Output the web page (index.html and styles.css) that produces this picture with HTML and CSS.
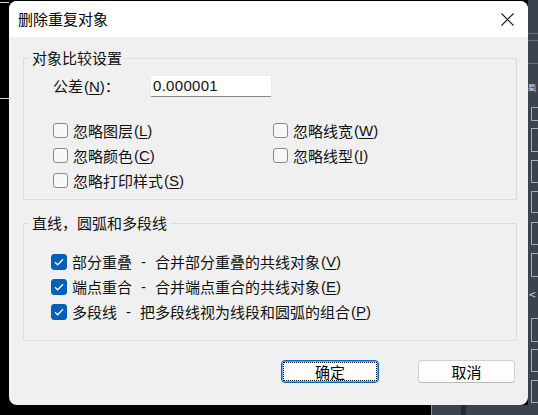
FILE: index.html
```html
<!DOCTYPE html>
<html lang="zh-CN">
<head>
<meta charset="utf-8">
<title>删除重复对象</title>
<link rel="stylesheet" href="styles.css">
</head>
<body>
<div class="desktop">
  <div class="bg-line bg-line-a"></div>
  <div class="bg-line bg-line-b"></div>
  <div class="side">
    <div class="side-h side-h1"></div>
    <div class="side-h side-h2"></div>
    <div class="side-h side-h3"></div>
    <span class="side-text">星[</span>
    <div class="side-box" style="top:107px;height:14px"></div>
    <div class="side-box" style="top:128px;height:24px"></div>
    <div class="side-box" style="top:160px;height:23px"></div>
    <div class="side-box" style="top:191px;height:22px"></div>
    <div class="side-box" style="top:222px;height:23px"></div>
    <div class="side-box" style="top:253px;height:24px"></div>
    <span class="side-arrow">&lt;</span>
    <div class="side-box" style="top:318px;height:24px"></div>
    <div class="side-box" style="top:349px;height:23px"></div>
    <div class="side-box" style="top:380px;height:23px"></div>
  </div>
  <div class="bottom-strip">
    <div class="bottom-block"></div>
  </div>

  <div class="dialog">
    <div class="titlebar">
      <span class="title">删除重复对象</span>
      <span class="close">
        <svg width="13" height="13" viewBox="0 0 13 13"><path d="M0.5 0.5 L12.5 12.5 M12.5 0.5 L0.5 12.5" stroke="#1a1a1a" stroke-width="1.1" fill="none"/></svg>
      </span>
    </div>
    <div class="body">
      <section class="group g1">
        <div class="legend">对象比较设置</div>
        <div class="tol-row">
          <span class="tol-label">公差<span class="mn">(<u>N</u>)</span>：</span>
          <div class="input">0.000001</div>
        </div>
        <div class="opts">
          <label class="opt"><span class="cb"></span>忽略图层<span class="mn">(<u>L</u>)</span></label>
          <label class="opt"><span class="cb"></span>忽略线宽<span class="mn">(<u>W</u>)</span></label>
          <label class="opt"><span class="cb"></span>忽略颜色<span class="mn">(<u>C</u>)</span></label>
          <label class="opt"><span class="cb"></span>忽略线型<span class="mn">(<u>I</u>)</span></label>
          <label class="opt"><span class="cb"></span>忽略打印样式<span class="mn">(<u>S</u>)</span></label>
        </div>
      </section>
      <section class="group g2">
        <div class="legend">直线，圆弧和多段线</div>
        <div class="checks">
          <label class="opt"><span class="cb on"><svg width="10" height="8" viewBox="0 0 10 8"><path d="M1 4.2 L3.7 6.8 L9 1.3" stroke="#fff" stroke-width="1.3" fill="none"/></svg></span>部分重叠<span class="dash">-</span>合并部分重叠的共线对象<span class="mn">(<u>V</u>)</span></label>
          <label class="opt"><span class="cb on"><svg width="10" height="8" viewBox="0 0 10 8"><path d="M1 4.2 L3.7 6.8 L9 1.3" stroke="#fff" stroke-width="1.3" fill="none"/></svg></span>端点重合<span class="dash">-</span>合并端点重合的共线对象<span class="mn">(<u>E</u>)</span></label>
          <label class="opt"><span class="cb on"><svg width="10" height="8" viewBox="0 0 10 8"><path d="M1 4.2 L3.7 6.8 L9 1.3" stroke="#fff" stroke-width="1.3" fill="none"/></svg></span>多段线<span class="dash">-</span>把多段线视为线段和圆弧的组合<span class="mn">(<u>P</u>)</span></label>
        </div>
      </section>
      <div class="buttons">
        <button class="btn primary"><span class="focus">确定</span></button>
        <button class="btn">取消</button>
      </div>
    </div>
  </div>
</div>
</body>
</html>
```

FILE: styles.css
```css
html, body {
  margin: 0;
  padding: 0;
}
body {
  background: #000;
  font-family: "Noto Sans CJK SC", "Noto Sans", sans-serif;
  color: #000;
  overflow: hidden;
}
.desktop {
  position: relative;
  width: 538px;
  height: 415px;
  padding: 1px 0 0 9px;
  box-sizing: border-box;
}

/* background desktop decorations */
.bg-line {
  position: absolute;
  left: 0;
  width: 9px;
  height: 1px;
  background: #d8d8d8;
}
.bg-line-a { top: 2px; }
.bg-line-b { top: 98px; }
.side {
  position: absolute;
  left: 528px;
  top: 0;
  width: 10px;
  height: 415px;
  background: #3b4350;
  overflow: hidden;
}
.side-h {
  position: absolute;
  left: 0;
  right: 0;
  height: 1px;
  background: #6b7380;
}
.side-h1 { top: 33px; }
.side-h2 { top: 40px; }
.side-h3 { top: 63px; }
.side-text {
  position: absolute;
  left: 0;
  top: 82px;
  font-size: 7px;
  line-height: 10px;
  letter-spacing: -1px;
  color: #e0e0e0;
  white-space: nowrap;
}
.side-box {
  position: absolute;
  left: 3px;
  width: 20px;
  border: 1px solid #a8adb5;
  box-sizing: border-box;
}
.side-arrow {
  position: absolute;
  left: 1px;
  top: 287px;
  font-size: 12px;
  line-height: 14px;
  color: #d0d0d0;
}
.bottom-strip {
  position: absolute;
  left: 431px;
  top: 405px;
  width: 107px;
  height: 10px;
  background: #3b4350;
  border-left: 1px solid #8a929e;
  box-sizing: border-box;
}
.bottom-block {
  position: absolute;
  left: 29px;
  top: 0;
  width: 5px;
  height: 10px;
  background: #262b33;
}

/* dialog */
.dialog {
  position: relative;
  width: 519px;
  height: 404px;
  background: #f0f0f0;
  border-radius: 8px;
  overflow: hidden;
  display: flex;
  flex-direction: column;
}
.titlebar {
  height: 36px;
  flex: none;
  background: #fff;
  display: flex;
  align-items: center;
  justify-content: space-between;
  padding-left: 9px;
}
.title {
  font-size: 15px;
  line-height: 20px;
}
.close {
  width: 41px;
  height: 36px;
  display: flex;
  align-items: center;
  justify-content: center;
}
.body {
  flex: 1;
  display: flex;
  flex-direction: column;
  padding: 0 11px 0 14px;
  font-size: 15px;
  color: #111;
}
.mn {
  font-family: "Liberation Sans", "Noto Sans CJK SC", sans-serif;
  margin-left: 1px;
}
.mn u {
  text-underline-offset: 2px;
}
.group {
  border: 1px solid #dcdcdc;
  display: flex;
  flex-direction: column;
}
.g1 {
  margin-top: 21px;
  padding-bottom: 6px;
}
.g2 {
  margin-top: 23px;
  padding-bottom: 16px;
}
.legend {
  align-self: flex-start;
  margin: -11px 0 0 5px;
  padding: 0 3px;
  background: #f0f0f0;
  line-height: 20px;
}
.tol-row {
  display: flex;
  align-items: center;
  height: 22px;
  margin: 7px 0 0 29px;
}
.tol-label {
  width: 97px;
  line-height: 20px;
}
.input {
  width: 122px;
  height: 22px;
  box-sizing: border-box;
  background: #fff;
  border: 1px solid #ececec;
  border-bottom-color: #8a8a8a;
  border-radius: 2px;
  padding-left: 2px;
  line-height: 20px;
  font-family: "Liberation Sans", sans-serif;
  letter-spacing: 0.3px;
}
.opts {
  display: grid;
  grid-template-columns: 220px auto;
  grid-auto-rows: 25px;
  margin: 21px 0 0 29px;
}
.checks {
  display: grid;
  grid-auto-rows: 25px;
  margin: 16px 0 0 27px;
}
.opt {
  display: flex;
  align-items: center;
  white-space: nowrap;
  line-height: 20px;
}
.cb {
  flex: none;
  width: 15px;
  height: 15px;
  margin-right: 5px;
  box-sizing: border-box;
  border: 1px solid #8a8a8a;
  border-radius: 3px;
  background: #f7f7f7;
  display: flex;
  align-items: center;
  justify-content: center;
}
.cb.on {
  width: 16px;
  height: 16px;
  background: #005fb8;
  border-color: #005fb8;
}
.dash {
  font-family: "Liberation Sans", sans-serif;
  margin: 0 9px;
}
.buttons {
  display: flex;
  justify-content: flex-end;
  gap: 39px;
  margin: 19px 2px 0 0;
}
.btn {
  width: 97px;
  height: 23px;
  box-sizing: border-box;
  border: 1px solid #d0d0d0;
  border-bottom-color: #bcbcbc;
  border-radius: 4px;
  background: #fdfdfd;
  font-family: inherit;
  font-size: 15px;
  line-height: 19px;
  color: #000;
  padding: 0;
  display: flex;
  align-items: center;
  justify-content: center;
}
.btn.primary {
  width: 98px;
  border: 1px solid #0067c0;
  box-shadow: inset 0 0 0 1px #6aa8e0;
  padding: 1px;
}
.focus {
  flex: 1;
  align-self: stretch;
  display: flex;
  align-items: center;
  justify-content: center;
  border: 1px dotted #000;
}
```
